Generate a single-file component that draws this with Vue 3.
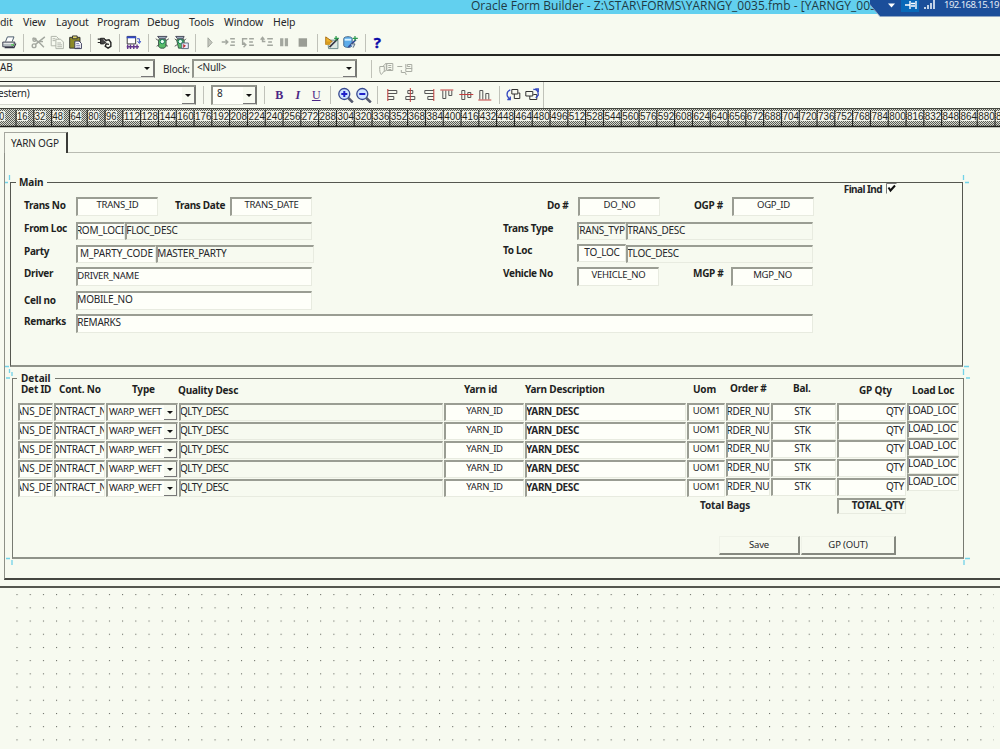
<script setup>
const menus = ['dit', 'View', 'Layout', 'Program', 'Debug', 'Tools', 'Window', 'Help']
const ticks = Array.from({ length: 57 }, (_, i) => ({ x: -1.8 + i * 17.8, label: i * 16 }))
const rows = 5
const columns = [
  { key: 'det', title: 'Det ID', text: 'ANS_DET' },
  { key: 'cont', title: 'Cont. No', text: 'CONTRACT_NO' },
  { key: 'type', title: 'Type', text: 'WARP_WEFT' },
  { key: 'qlty', title: 'Quality Desc', text: 'QLTY_DESC' },
  { key: 'yid', title: 'Yarn id', text: 'YARN_ID' },
  { key: 'ydesc', title: 'Yarn Description', text: 'YARN_DESC' },
  { key: 'uom', title: 'Uom', text: 'UOM1' },
  { key: 'order', title: 'Order #', text: 'ORDER_NUM' },
  { key: 'stk', title: 'Bal.', text: 'STK' },
  { key: 'qty', title: 'GP Qty', text: 'QTY' },
  { key: 'load', title: 'Load Loc', text: 'LOAD_LOC' },
]
</script>

<template>
  <div class="app">
    <header class="title">
      <span class="caption">Oracle Form Builder - Z:\STAR\FORMS\YARNGY_0035.fmb - [YARNGY_0035: TAB_PR...]</span>
      <div class="remote">
        <svg width="130" height="18" viewBox="870 0 130 18">
          <path d="M866 0L880 16.5H1000V0Z" fill="#1b4e9a" />
          <path d="M866 0L880 16.5H1000" fill="none" stroke="#8fa6c4" />
          <path d="M901 0H919V12H901Z" fill="#0868b8" />
          <path d="M888 3.5H895L891.5 7.5Z" fill="#fff" />
          <path d="M905 5H910M910 1V9M911 3.500H915M911 6H915M916 1V9" stroke="#fff" stroke-width="1.400" />
          <path d="M925 9V7M928 9V5M931 9V3M934 9V0" stroke="#dfe9f5" stroke-width="1.7" />
        </svg>
        <span class="ip">192.168.15.19</span>
      </div>
    </header>

    <nav class="menu">
      <span v-for="m in menus" :key="m" :class="'m-' + m.toLowerCase()">{{ m }}</span>
    </nav>

    <div class="bar tools">
      <svg viewBox="0 0 16 16"><path d="M4 7L6 2H13L11 7" fill="#fff" stroke="#456" /><path d="M1 7.500H14L12 12.500H1Z" fill="#b4bdc0" stroke="#445" /><path d="M2 9H12" stroke="#eee" /><path d="M3 13.500H13L15 9" fill="none" stroke="#334" stroke-width="1.300" /><path d="M10 10.500H13" stroke="#5c5" stroke-width="1.500" /></svg>
      <i class="sep"></i>
      <svg viewBox="0 0 16 16" fill="none" stroke="#a3a79f" stroke-width="1.5"><path d="M15 2L5 10M2 3L9 8L14 13" /><circle cx="3.500" cy="11.500" r="2" /><circle cx="4" cy="5" r="1.700" /><path d="M7 7H13" /></svg>
      <svg viewBox="0 0 16 16" fill="#f7faf0" stroke="#adb1a8"><path d="M1.500 1.500H7L9.500 4V11.500H1.500Z" /><path d="M6.500 4.500H11.500L14.500 7.500V14.500H6.500Z" /><path d="M3 4H6M3 6H6M8 8.500H12M8 10.500H13M8 12.500H13" /></svg>
      <svg viewBox="0 0 16 16"><path d="M2 2.500H13V14H2Z" fill="#8c8a28" stroke="#333" /><path d="M5 1H10V4H5Z" fill="#e0d36a" stroke="#333" /><path d="M7.500 6.500H12L14.500 9V14.500H7.500Z" fill="#fff" stroke="#335" /><path d="M9 9H12M9 11H13M9 13H13" stroke="#77a" /></svg>
      <i class="sep"></i>
      <svg viewBox="0 0 16 16" fill="none" stroke="#222"><path d="M1 4.500H5M1 8H5" stroke-width="1.300" /><path d="M4 3.500H8L9.500 5V8L7 9.500H4Z" fill="#444" /><path d="M8 6L13 5L15 8V12L12 14L9 12L10 9.500L13 10" stroke-width="1.500" /><path d="M7 5L11 8" stroke="#bbb" /></svg>
      <i class="sep"></i>
      <svg viewBox="0 0 16 16" fill="none"><path d="M1.500 1.500H10.500V9.500H1.500Z" stroke="#333" fill="#fff" /><path d="M1 2.500H11" stroke="#3048c8" stroke-width="2" /><path d="M12 4H14.500V8M12.500 6.500L14.500 9L16 6.500" stroke="#3048c8" /><path d="M2 10V15M5 10V15M8.500 10V15M12 10V15M1 12.500H14" stroke="#64388e" stroke-width="1.500" /></svg>
      <i class="sep"></i>
      <svg viewBox="0 0 16 16"><path d="M3 1.500H13L11 4H5Z" fill="#9ab" stroke="#445" /><path d="M4 5H12V12L10 14H6L4 12Z" fill="#58bd68" stroke="#354" /><circle cx="8" cy="7" r="2.300" fill="#e8fff0" stroke="#175" /><path d="M1 4L4 6M15 4L12 6M2 12L5 10M14 12L11 10" stroke="#555" /></svg>
      <svg viewBox="0 0 16 16"><path d="M2 1.500H11L10 4H4Z" fill="#9ab" stroke="#445" /><path d="M3 5H11V12L9 14H5Z" fill="#58bd68" stroke="#354" /><circle cx="7" cy="7" r="2.300" fill="#e8fff0" stroke="#175" /><path d="M1 4L3 6M13 4L11 6M1 12L4 10" stroke="#555" /><path d="M8.500 8.500H15.500V14.500H8.500Z" fill="#eef" stroke="#567" /><path d="M10 9.500V14L13 11.500Z" fill="#b33" /></svg>
      <i class="sep"></i>
      <svg viewBox="0 0 16 16"><path d="M5.500 3V13L10 8Z" fill="#c4c7be" stroke="#9fa39b" /></svg>
      <svg viewBox="0 0 16 16" fill="none" stroke="#a3a79f" stroke-width="1.500"><path d="M1 7.500H7M5 5L7.500 7.500L5 10M10 4H15M11 7.500H15M10 11H15" /></svg>
      <svg viewBox="0 0 16 16" fill="none" stroke="#a3a79f" stroke-width="1.500"><path d="M8 4H3V10H6M4 8L6.500 10.500L4 13M10 4H15M10 7.500H14M10 11H15" /></svg>
      <svg viewBox="0 0 16 16" fill="none" stroke="#a3a79f" stroke-width="1.500"><path d="M7 7H4V3M2 5L4 2.500L6 5M9 4H15M10 7.500H14M9 11H15" /></svg>
      <svg viewBox="0 0 16 16" fill="#a3a79f"><path d="M3.500 3.500H7V12H3.500ZM8.500 3.500H12V12H8.500Z" /></svg>
      <svg viewBox="0 0 16 16"><path d="M3 3.500H12V12.500H3Z" fill="#9a9d95" /></svg>
      <i class="sep"></i>
      <svg viewBox="0 0 16 16"><path d="M3 5.500H14V14.500H4Z" fill="#dce8e2" stroke="#688" /><path d="M1 2L8 7L1 10Z" fill="#f0b42c" stroke="#a66a10" /><path d="M5 13L14 4" stroke="#334" stroke-width="1.700" /><path d="M12 1V6M10 3.500H15" stroke="#2a9a4c" stroke-width="1.300" /><path d="M1 7H6V10.500H1Z" fill="#d69b20" /></svg>
      <svg viewBox="0 0 16 16"><path d="M1 4C1 1 10 1 10 4V11C10 14 1 14 1 11Z" fill="#5cacea" stroke="#468" /><path d="M2 5H9" stroke="#d8f2ff" stroke-width="2" /><path d="M6 13L14 5" stroke="#334a98" stroke-width="1.700" /><path d="M8.500 9.500H13L11 13.500" fill="#cde" stroke="#567" /><path d="M13 1V6M10.500 3.500H16" stroke="#2a9a4c" stroke-width="1.300" /></svg>
      <i class="sep"></i>
      <b class="help">?</b>
    </div>

    <div class="bar blockbar">
      <div class="combo c1"><span>AB</span><em><i class="arrow"></i></em></div>
      <span class="lbl">Block:</span>
      <div class="combo c2"><span>&lt;Null&gt;</span><em><i class="arrow"></i></em></div>
      <i class="sep"></i>
      <svg viewBox="0 0 16 16" fill="none" stroke="#a9aca3"><path d="M1.500 5.500H6V10L3 13.500Q1 12 1.500 5.500ZM5 5L8 2V9L6 11" /><path d="M8.500 2.500H14.500V9.500H8.500ZM10 4.500H13M10 6.500H13M10 8.500H13" /></svg>
      <svg viewBox="0 0 16 16" fill="none" stroke="#a9aca3"><path d="M0 5.500H5M4 9V11.500H8L9 14M8.500 3V7.500H14.500V3.500H10V5.500H13M8.500 8V10.500H14.500V7" /></svg>
    </div>

    <div class="bar format">
      <div class="combo c3"><span>estern)</span><em><i class="arrow"></i></em></div>
      <i class="sep"></i>
      <div class="combo c4"><span>8</span><em><i class="arrow"></i></em></div>
      <i class="sep"></i>
      <b class="glyph">B</b><b class="glyph it">I</b><b class="glyph un">U</b>
      <i class="sep s3"></i>
      <svg viewBox="0 0 16 16"><circle cx="7" cy="7" r="5.500" fill="#cfe4ff" stroke="#37488e" stroke-width="1.300" /><path d="M11 11L15.500 15.500" stroke="#555a6e" stroke-width="2.500" /><path d="M7 4V10M4 7H10" stroke="#2020c8" stroke-width="2" /></svg>
      <svg viewBox="0 0 16 16"><circle cx="7" cy="7" r="5.500" fill="#cfe4ff" stroke="#37488e" stroke-width="1.300" /><path d="M11 11L15.500 15.500" stroke="#555a6e" stroke-width="2.500" /><path d="M4 7H10" stroke="#2020c8" stroke-width="2" /></svg>
      <i class="sep s4"></i>
      <svg viewBox="0 0 16 16" fill="none" stroke="#555"><path d="M3.500 3.500H12.500V6.500H3.500M3.500 9.500H9.500V12.500H3.500" /><path d="M3.500 2V14" stroke="#c23c3c" /></svg>
      <svg viewBox="0 0 16 16" fill="none" stroke="#555"><path d="M5.500 3.500H10.500V6.500H5.500ZM3.500 9.500H12.500V12.500H3.500Z" /><path d="M8 1V15" stroke="#c23c3c" /></svg>
      <svg viewBox="0 0 16 16" fill="none" stroke="#555"><path d="M12.500 3.500H3.500V6.500H12.500M12.500 9.500H6.500V12.500H12.500" /><path d="M12.500 2V14" stroke="#c23c3c" /></svg>
      <svg viewBox="0 0 16 16" fill="none" stroke="#555"><path d="M3.500 3.500V11.500H6.500V3.500M9.500 3.500V8.500H12.500V3.500" /><path d="M1 3H14" stroke="#c23c3c" /></svg>
      <svg viewBox="0 0 16 16" fill="none" stroke="#555"><path d="M3.500 3.500V12.500H6.500V3.500ZM9.500 5.500V10.500H12.500V5.500Z" /><path d="M1 7.500H15" stroke="#c23c3c" /></svg>
      <svg viewBox="0 0 16 16" fill="none" stroke="#555"><path d="M2.500 12.500V3.500H5.500V12.500M8.500 12.500V6.500H11.500V12.500" /><path d="M1 13H14" stroke="#c23c3c" /></svg>
      <i class="sep s5"></i>
      <svg viewBox="0 0 16 16" fill="none" stroke="#333"><path d="M6.500 2.500H12.500V7H6.500ZM9 7V11.500H14.500V6H13" /><path d="M5 3Q1 4 2 9L4.500 12.500M2 12.500H5V9.500" stroke="#3448c0" stroke-width="1.300" /></svg>
      <svg viewBox="0 0 16 16" fill="none" stroke="#333"><path d="M1.500 4.500H8.500V9H1.500ZM5.500 9V12.500H12.500V7.500H9" /><path d="M9 2.500Q14 2 14 8L11.500 11M11 2H14V5" stroke="#3448c0" stroke-width="1.300" /></svg>
    </div>

    <svg class="ruler" width="1000" height="20" viewBox="0 0 1000 20">
      <defs>
        <pattern id="dither" width="2" height="2" patternUnits="userSpaceOnUse">
          <path d="M0 0H2V2H0Z" fill="#d8dad0" /><path d="M0 0H1V1H0ZM1 1H2V2H1Z" fill="#5a5c56" />
        </pattern>
      </defs>
      <path d="M0 0H1000V19H0Z" fill="url(#dither)" />
      <path d="M0 .5H1000" stroke="#44463f" />
      <g v-for="t in ticks" :key="t.label">
        <path :d="`M${t.x} 2V19`" stroke="#1c1d1a" />
        <rect :x="t.x + 1" y="3" :width="t.label < 10 ? 6 : t.label < 100 ? 11 : 16.8" height="10" fill="#f1f3ea" />
        <text :x="t.x + 1" y="12.3" :textLength="t.label < 10 ? 5 : t.label < 100 ? 10.5 : 16.5" lengthAdjust="spacingAndGlyphs">{{ t.label }}</text>
      </g>
      <path d="M0 18.500H1000" stroke="#1d1e1b" stroke-width="1.500" />
    </svg>

    <main class="canvas">
      <div class="tabs"><div class="tab">YARN OGP</div></div>
      <div class="page">
        <section class="group main">
          <span class="legend">Main</span>
          <div class="final"><span>Final Ind</span>
            <svg width="11" height="11" viewBox="0 0 11 11"><path d="M.5 10.500V.5H10.500" fill="#fefff9" stroke="#777" /><path d="M2.500 4.500L4.500 7.500L9 2.500" fill="none" stroke="#111" stroke-width="2" /></svg>
          </div>
          <div class="cols">
            <div class="left">
              <div class="line l1"><label>Trans No</label><div class="field id">TRANS_ID</div><label class="second">Trans Date</label><div class="field id date">TRANS_DATE</div></div>
              <div class="line l2"><label>From Loc</label><div class="field code cut">FROM_LOCID</div><div class="field desc">FLOC_DESC</div></div>
              <div class="line l3"><label>Party</label><div class="field party">M_PARTY_CODE</div><div class="field desc pd">MASTER_PARTY</div></div>
              <div class="line l4"><label>Driver</label><div class="field wide narrow">DRIVER_NAME</div></div>
              <div class="line l5"><label>Cell no</label><div class="field wide">MOBILE_NO</div></div>
            </div>
            <div class="right">
              <div class="line r1"><label>Do #</label><div class="field id">DO_NO</div><label class="second">OGP #</label><div class="field id">OGP_ID</div></div>
              <div class="line r2"><label>Trans Type</label><div class="field code cut gray">TRANS_TYPE</div><div class="field desc">TRANS_DESC</div></div>
              <div class="line r3"><label>To Loc</label><div class="field code">TO_LOC</div><div class="field desc tl">TLOC_DESC</div></div>
              <div class="line r4"><label>Vehicle No</label><div class="field id">VEHICLE_NO</div><label class="second">MGP #</label><div class="field id">MGP_NO</div></div>
            </div>
          </div>
          <div class="line l6"><label>Remarks</label><div class="field full">REMARKS</div></div>
        </section>

        <section class="group detail">
          <span class="legend">Detail</span>
          <div class="grid">
            <div v-for="c in columns" :key="c.key" class="col" :class="c.key">
              <div class="head">{{ c.title }}</div>
              <div v-for="n in rows" :key="n" class="cell"><span>{{ c.text }}</span><em v-if="c.key === 'type'"><i class="arrow"></i></em></div>
            </div>
          </div>
          <div class="total"><span>Total Bags</span><div class="field">TOTAL_QTY</div></div>
          <div class="buttons"><button class="save">Save</button><button class="out">GP (OUT)</button></div>
        </section>
        <svg class="handles" width="1000" height="400" viewBox="0 170 1000 400" fill="none" stroke="#72d3e8" stroke-width="1.300">
          <path d="M9.500 175V180M5 182.500H8M963.500 175V180M965 182.500H969M5 366.500H9M9.500 369V373M12 372V376M6 378H10M964 366.500H969M963.500 369V375M966 378H970M6 558.500H10M12 560V565M965 558.500H970M964 560V565" />
        </svg>
      </div>
      <svg class="dots" width="1000" height="161" viewBox="0 588 1000 161">
        <defs><pattern id="dot" x="10.400" y="594.200" width="13.370" height="13.370" patternUnits="userSpaceOnUse"><rect width="1.050" height="1.050" fill="#5b5d56" /></pattern></defs>
        <rect x="0" y="589" width="1000" height="160" fill="url(#dot)" />
      </svg>
    </main>
  </div>
</template>

<style>
body { background: #f7faf0; overflow: hidden; }
</style>

<style scoped>
* { box-sizing: border-box; }
.app { width: 1000px; height: 749px; overflow: hidden; background: #f7faf0; color: #25262a; font: 10px/12px "Noto Sans", "Open Sans", sans-serif; white-space: nowrap; }
i, em { font-style: normal; }
.title { position: relative; height: 14px; background: #62d0ef; color: #1f3a44; }
.caption { display: block; padding-left: 471px; width: 1000px; overflow: hidden; font: 12px/11px "Open Sans", sans-serif; height: 14px; letter-spacing: .02px; }
.remote { position: absolute; right: 0; top: 0; width: 130px; height: 18px; }
.remote svg { display: block; }
.ip { position: absolute; left: 74px; top: -1px; color: #e3ecf7; font-size: 9.500px; letter-spacing: -.55px; }
.menu { display: flex; height: 17px; padding-top: 2px; font-size: 10.500px; line-height: 13px; }
.menu span { flex: none; letter-spacing: -.1px; }
.m-dit { width: 23px; } .m-view { width: 33px; } .m-layout { width: 41px; } .m-program { width: 50px; }
.m-debug { width: 42px; } .m-tools { width: 35px; } .m-window { width: 49px; }
.bar { display: flex; align-items: center; }
.bar svg { flex: none; width: 18.600px; height: 16px; }
.sep { flex: none; width: 10.500px; height: 18px; background: linear-gradient(#c0c2b9, #c0c2b9) center / 1px 100% no-repeat; }
.tools { height: 25px; border-bottom: 2px solid #252622; }
.tools svg:first-child { margin-left: 0; }
.tools svg { height: 15px; margin-top: -1px; }
.tools svg + .sep { margin-right: -.1px; }
.help { width: 18px; margin-left: -2px; text-align: center; font: bold 15px/16px "Open Sans", sans-serif; color: #0a0aa8; -webkit-text-stroke: .4px #0a0aa8; }
.tools .help { margin-top: -2px; }
.blockbar { height: 26px; border-bottom: 1px solid #252622; }
.combo { flex: none; display: flex; height: 19px; border-top: 2px solid #92958c; border-left: 2px solid #92958c; border-right: 1px solid #777a72; border-bottom: 1px solid #d5d7ce; }
.combo span { flex: 1; line-height: 13px; letter-spacing: -.2px; }
.combo em, .type em { flex: none; width: 13px; border-right: 1px solid #777; border-bottom: 1px solid #777; display: flex; align-items: center; justify-content: center; background: #f7faf0; }
.arrow { width: 0; height: 0; border: 3px solid transparent; border-top: 3px solid #111; border-bottom: 0; }
.blockbar .combo { margin-top: -1px; }
.c1 { width: 155px; border-left: 0; }
.lbl { width: 37px; padding-left: 8px; letter-spacing: -.2px; }
.c2 { width: 165px; } .c2 span { padding-left: 3px; }
.blockbar .sep { width: 19px; margin-left: 5px; margin-right: -4px; }
.format { height: 26px; width: 544px; border-right: 1px solid #c0c2b9; }
.format .combo { height: 20px; background: #fefff9; }
.c3 { width: 196px; border-left: 0; } .c3 span { margin-left: -2px; }
.c4 { width: 46px; } .c4 span { padding-left: 4px; }
.format .sep { width: 15px; }
.glyph { width: 18.500px; text-align: center; font: bold 12px/16px "Liberation Serif", serif; color: #4a2684; }
.c4 + .sep { margin-right: -2px; }
.it { font-style: italic; } .un { text-decoration: underline; font-weight: normal; }
.format .s3, .format .s4, .format .s5 { width: 10px; }
.ruler { display: block; }
.ruler text { font: 11px "Liberation Sans", sans-serif; fill: #1e1f1b; }
.canvas { height: 621px; }
.tabs { height: 25px; margin-left: 4px; padding-top: 4px; border-bottom: 1px solid #b9bbb2; }
.tab { width: 64px; height: 21px; border: 1px solid #a5a79f; border-right: 2px solid #3a3b37; border-bottom: 0; background: #f7faf0; padding: 3.500px 0 0 6px; letter-spacing: -.15px; }
.page { position: relative; height: 427px; margin-left: 4px; padding: 29px 0 0 6px; border-left: 1px solid #8d9087; border-bottom: 2px solid #454641; }
.handles { position: absolute; left: -5px; top: 17px; }
.group { position: relative; border: 1px solid #555750; }
.legend { display: block; width: fit-content; background: #f7faf0; font-weight: bold; height: 12px; margin-top: -7px; color: #1e1f22; }
.main { width: 953px; height: 185px; margin-left: -1px; border-bottom: 2px solid #8f9289; }
.main .legend { margin-left: 5px; padding: 0 3px; letter-spacing: -.1px; }
.final { position: absolute; right: 65px; top: -1px; display: flex; align-items: center; gap: 4px; font-weight: bold; letter-spacing: -.55px; height: 13px; }
.cols { display: flex; margin-top: 9px; padding-left: 13px; }
.left { width: 479px; }
.line { display: flex; align-items: flex-start; }
label { flex: none; width: 52px; font-weight: bold; letter-spacing: -.3px; color: #1e1f22; }
.field, .cell { overflow: hidden; border-top: 2px solid #9a9d93; border-left: 2px solid #9a9d93; border-right: 1px solid #e8ebe0; border-bottom: 1px solid #e8ebe0; background: #fefff9; }
.field { flex: none; height: 19px; line-height: 13px; letter-spacing: -.25px; }
.field.desc, .field.wide, .field.full { text-indent: -.7px; }
.id { width: 82px; text-align: center; font-size: 9.500px; line-height: 12px; }
.code { width: 49px; text-align: center; }
.cut { display: flex; justify-content: center; }
.desc, .gray { background: #f7faf0; }
.desc { width: 187px; }
.line .desc, .code, .party { height: 18px; }
.l1, .r1 { height: 25px; } .l1 label, .r1 label { padding-top: 2px; }
.l1 .second { margin-left: 17px; width: 55px; }
.l2 { height: 23px; } .l2 label { padding-top: 0; }
.l3 { height: 22px; } .l4 { height: 24px; } .l5 { height: 23px; }
.l5 label { padding-top: 3px; } .l6 label { padding-top: 1px; }
.party { width: 80px; text-align: center; letter-spacing: -.1px; } .pd { width: 158px; }
.wide { width: 236px; } .full { width: 737px; }
.narrow { font-size: 9.500px; }
.right .second { width: 38px; margin-left: 34px; }
.r1 label:first-child { width: 31px; margin-left: 44px; }
.r2 label:first-child, .r3 label:first-child, .r4 label:first-child { width: 74px; }
.r2 { height: 22px; } .r3 { height: 23px; }
.tl { margin-top: 1px; }
.l6 { padding-left: 13px; }
.detail { width: 952px; height: 181px; margin: 11px 0 0 1px; border: 1px solid #777a71; border-bottom: 2px solid #8f9289; }
.detail .legend { margin-left: 4px; padding: 0 4px; }
.grid { display: flex; margin-left: 5px; height: 107px; }
.col { flex: none; margin-right: 1px; }
.head { height: 19px; font-weight: bold; letter-spacing: -.2px; color: #1e1f22; line-height: 11px; }
.cell { display: flex; height: 18px; margin-bottom: 1.100px; line-height: 12px; letter-spacing: -.25px; }
.det { width: 35px; } .cont { width: 51px; } .type { width: 72px; } .qlty { width: 264px; } .yid { width: 80px; } .ydesc { width: 161px; }
.uom { width: 38px; } .order { width: 44px; } .stk { width: 65px; } .qty { width: 69px; } .load { width: 52px; }
.det .cell, .cont .cell, .yid .cell, .uom .cell, .order .cell, .stk .cell { justify-content: center; }
.yid .cell, .uom .cell { font-size: 9.500px; } .stk .cell span { margin-left: -3px; }
.qty .cell { justify-content: flex-end; padding-right: 1px; }
.qlty .cell { background: #f7faf0; letter-spacing: -.55px; }
.qlty .cell span, .ydesc .cell span, .load .cell span { margin-left: -1px; }
.type .cell span { flex: 1; padding: 1px 0 0 1px; font-size: 9.500px; }
.ydesc .cell { font-weight: bold; letter-spacing: -.35px; }
.order .cell, .stk .cell, .qty .cell { margin-bottom: .700px; }
.load .cell { margin-bottom: 0; height: 17.700px; line-height: 11px; }
.det .head { padding-left: 3px; } .cont .head { padding-left: 5px; } .type .head { padding-left: 26px; }
.qlty .head { margin-left: -1px; line-height: 13px; }
.yid .head { padding-left: 20px; } .uom .head { padding-left: 6px; }
.order .head { padding-left: 4px; line-height: 9px; }
.stk .head { padding-left: 22px; line-height: 9px; } .qty .head { padding-left: 22px; line-height: 12px; } .load .head { padding-left: 5px; line-height: 13px; }
.total { display: flex; margin-left: 687px; margin-top: 7px; font-weight: bold; letter-spacing: -.1px; }
.total span { width: 137px; padding-top: 1px; }
.total .field { width: 69px; height: 16px; text-align: right; line-height: 11px; background: #f7faf0; padding-right: 1px; }
.buttons { display: flex; gap: 1px; margin: 22px 0 0 706px; }
button { height: 19px; padding: 0; border: 1px solid #eff2e8; border-right: 2px solid #85887f; border-bottom: 2px solid #85887f; background: #f7faf0; color: #25262a; font: 9.500px/14px "Noto Sans", sans-serif; letter-spacing: -.15px; }
.save { width: 81px; } .out { width: 95px; }
.dots { display: block; margin-top: 6px; border-top: 2px solid #55574f; }
</style>
